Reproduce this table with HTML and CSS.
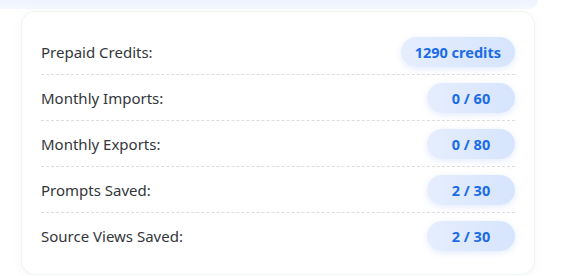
FILE: index.html
```html
<!DOCTYPE html>
<html lang="en">
<head>
    <meta charset="UTF-8">
    <meta name="viewport" content="width=device-width, initial-scale=1.0">
    <title>Usage</title>
    <link rel="stylesheet" href="styles.css">
</head>
<body>
    <!-- bottom of the panel above -->
    <div class="above-panel"></div>

    <div class="usage-card">
        <div class="usage-row">
            <span class="usage-label">Prepaid Credits:</span>
            <span class="usage-pill">1290 credits</span>
        </div>
        <div class="usage-row">
            <span class="usage-label">Monthly Imports:</span>
            <span class="usage-pill">0 / 60</span>
        </div>
        <div class="usage-row">
            <span class="usage-label">Monthly Exports:</span>
            <span class="usage-pill">0 / 80</span>
        </div>
        <div class="usage-row">
            <span class="usage-label">Prompts Saved:</span>
            <span class="usage-pill">2 / 30</span>
        </div>
        <div class="usage-row">
            <span class="usage-label">Source Views Saved:</span>
            <span class="usage-pill">2 / 30</span>
        </div>
    </div>
</body>
</html>
```

FILE: styles.css
```css
:root {
    --text-color: #33363b;
    --pill-text: #1b6ce6;
    --divider: #dddddd;
}

body {
    font-family: 'Noto Sans', sans-serif;
    margin: 0;
    background: #ffffff;
}

.above-panel {
    height: 9px;
    width: 538px;
    background: linear-gradient(#edf2fd, #f5f8fe);
    border-bottom-right-radius: 14px;
}

.usage-card {
    box-sizing: border-box;
    width: 514px;
    margin: 2px 0 0 21px;
    padding: 17px 19px 16px;
    background: white;
    border: 1px solid #edf6f1;
    border-radius: 14px;
    box-shadow: 0 2px 10px rgba(40, 80, 60, 0.05);
}

.usage-row {
    display: flex;
    justify-content: space-between;
    align-items: center;
    height: 45px;
    border-bottom: 1px dashed var(--divider);
}

.usage-row:last-child {
    border-bottom: none;
}

.usage-label {
    font-size: 15px;
    color: var(--text-color);
}

.usage-pill {
    min-width: 88px;
    box-sizing: border-box;
    padding: 0 14px;
    line-height: 30px;
    text-align: center;
    font-size: 14.5px;
    font-weight: 700;
    color: var(--pill-text);
    background: linear-gradient(90deg, #e6eefd, #d6e4fd);
    border-radius: 15px;
    box-shadow: 0 2px 6px rgba(80, 130, 240, 0.16);
}
```
